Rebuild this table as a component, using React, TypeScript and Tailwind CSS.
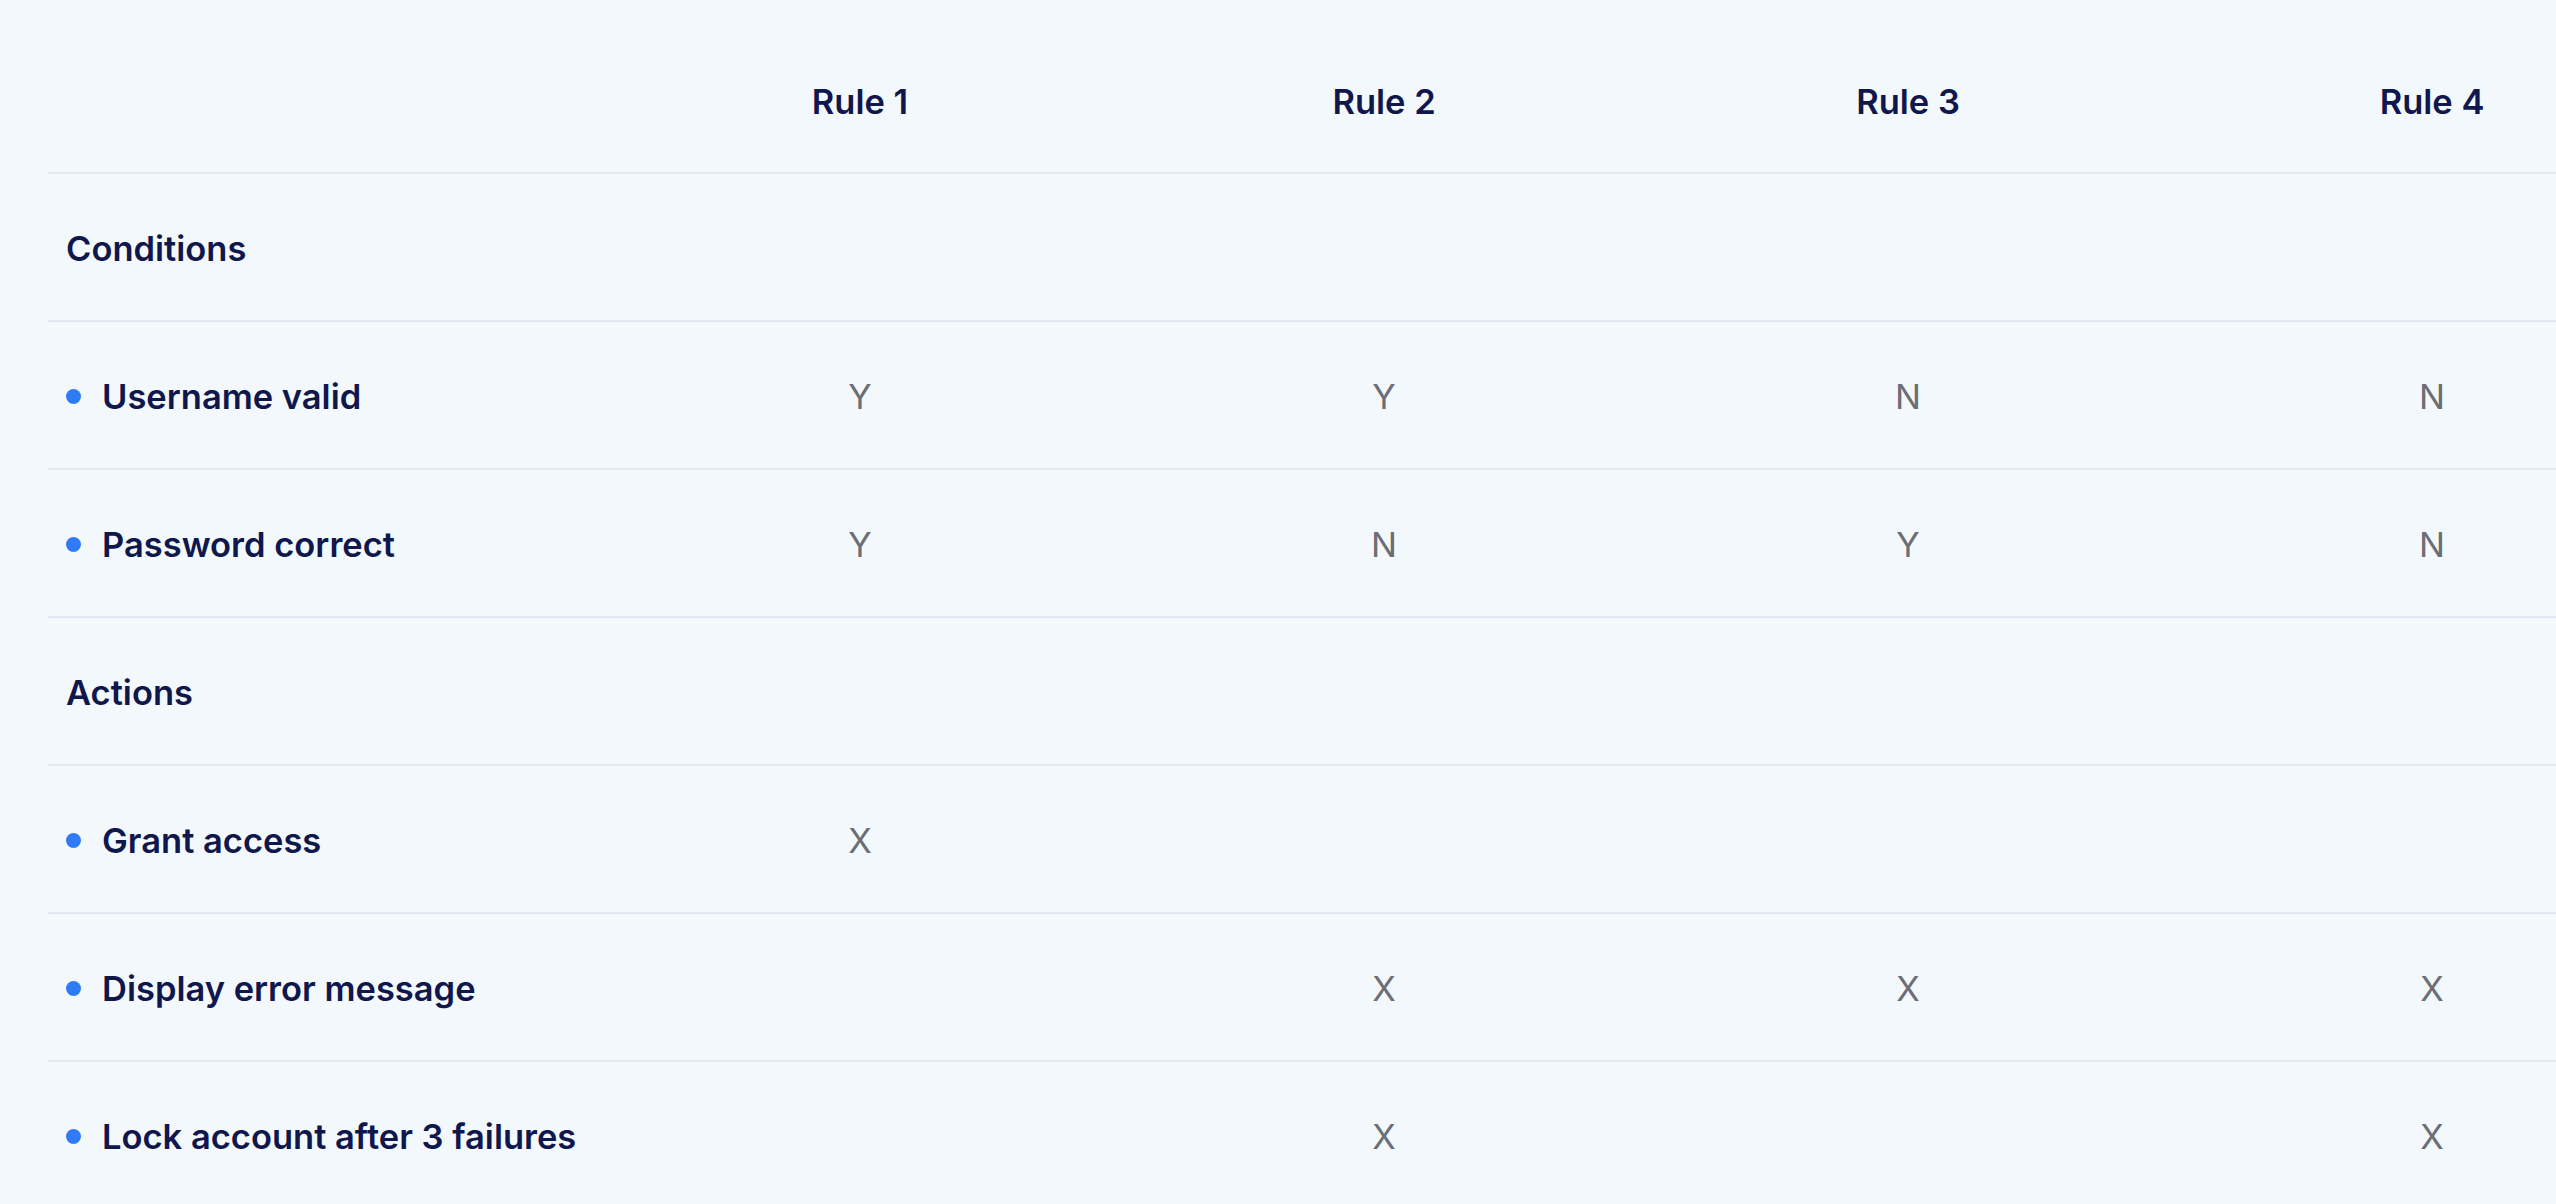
const rules = ["Rule 1", "Rule 2", "Rule 3", "Rule 4"];

type Row =
  | { kind: "section"; label: string }
  | { kind: "item"; label: string; values: string[] };

const rows: Row[] = [
  { kind: "section", label: "Conditions" },
  { kind: "item", label: "Username valid", values: ["Y", "Y", "N", "N"] },
  { kind: "item", label: "Password correct", values: ["Y", "N", "Y", "N"] },
  { kind: "section", label: "Actions" },
  { kind: "item", label: "Grant access", values: ["X", "", "", ""] },
  { kind: "item", label: "Display error message", values: ["", "X", "X", "X"] },
  { kind: "item", label: "Lock account after 3 failures", values: ["", "X", "", "X"] },
];

const rowClass =
  "grid h-[148px] grid-cols-[550px_repeat(4,524px)] items-center border-b-2 border-[#e0e8f1] pt-[3px]";

export default function App() {
  return (
    <div
      className="min-h-screen w-full overflow-hidden bg-[#f3f8fc] pl-12 pt-[28px] text-[34.5px] antialiased"
      style={{ fontFamily: "Inter, 'Noto Sans', sans-serif" }}
    >
      <div className="w-max">
        {/* Header */}
        <div className="grid h-[146px] grid-cols-[550px_repeat(4,524px)] items-center border-b-2 border-[#e0e8f1] pt-[3px]">
          <div />
          {rules.map((r) => (
            <div key={r} className="text-center font-semibold text-[#10174d]">
              {r}
            </div>
          ))}
        </div>

        {rows.map((row) =>
          row.kind === "section" ? (
            <div key={row.label} className={rowClass}>
              <div className="pl-[18px] font-semibold text-[#10174d]">{row.label}</div>
            </div>
          ) : (
            <div key={row.label} className={rowClass}>
              <div className="flex items-center gap-[21px] pl-[18px]">
                <span className="h-[15px] w-[15px] shrink-0 rounded-full bg-[#2f7bf6]" />
                <span className="font-semibold text-[#10174d]">{row.label}</span>
              </div>
              {row.values.map((v, i) => (
                <div key={i} className="text-center font-normal text-[#6b6e75]">
                  {v}
                </div>
              ))}
            </div>
          )
        )}
      </div>
    </div>
  );
}
